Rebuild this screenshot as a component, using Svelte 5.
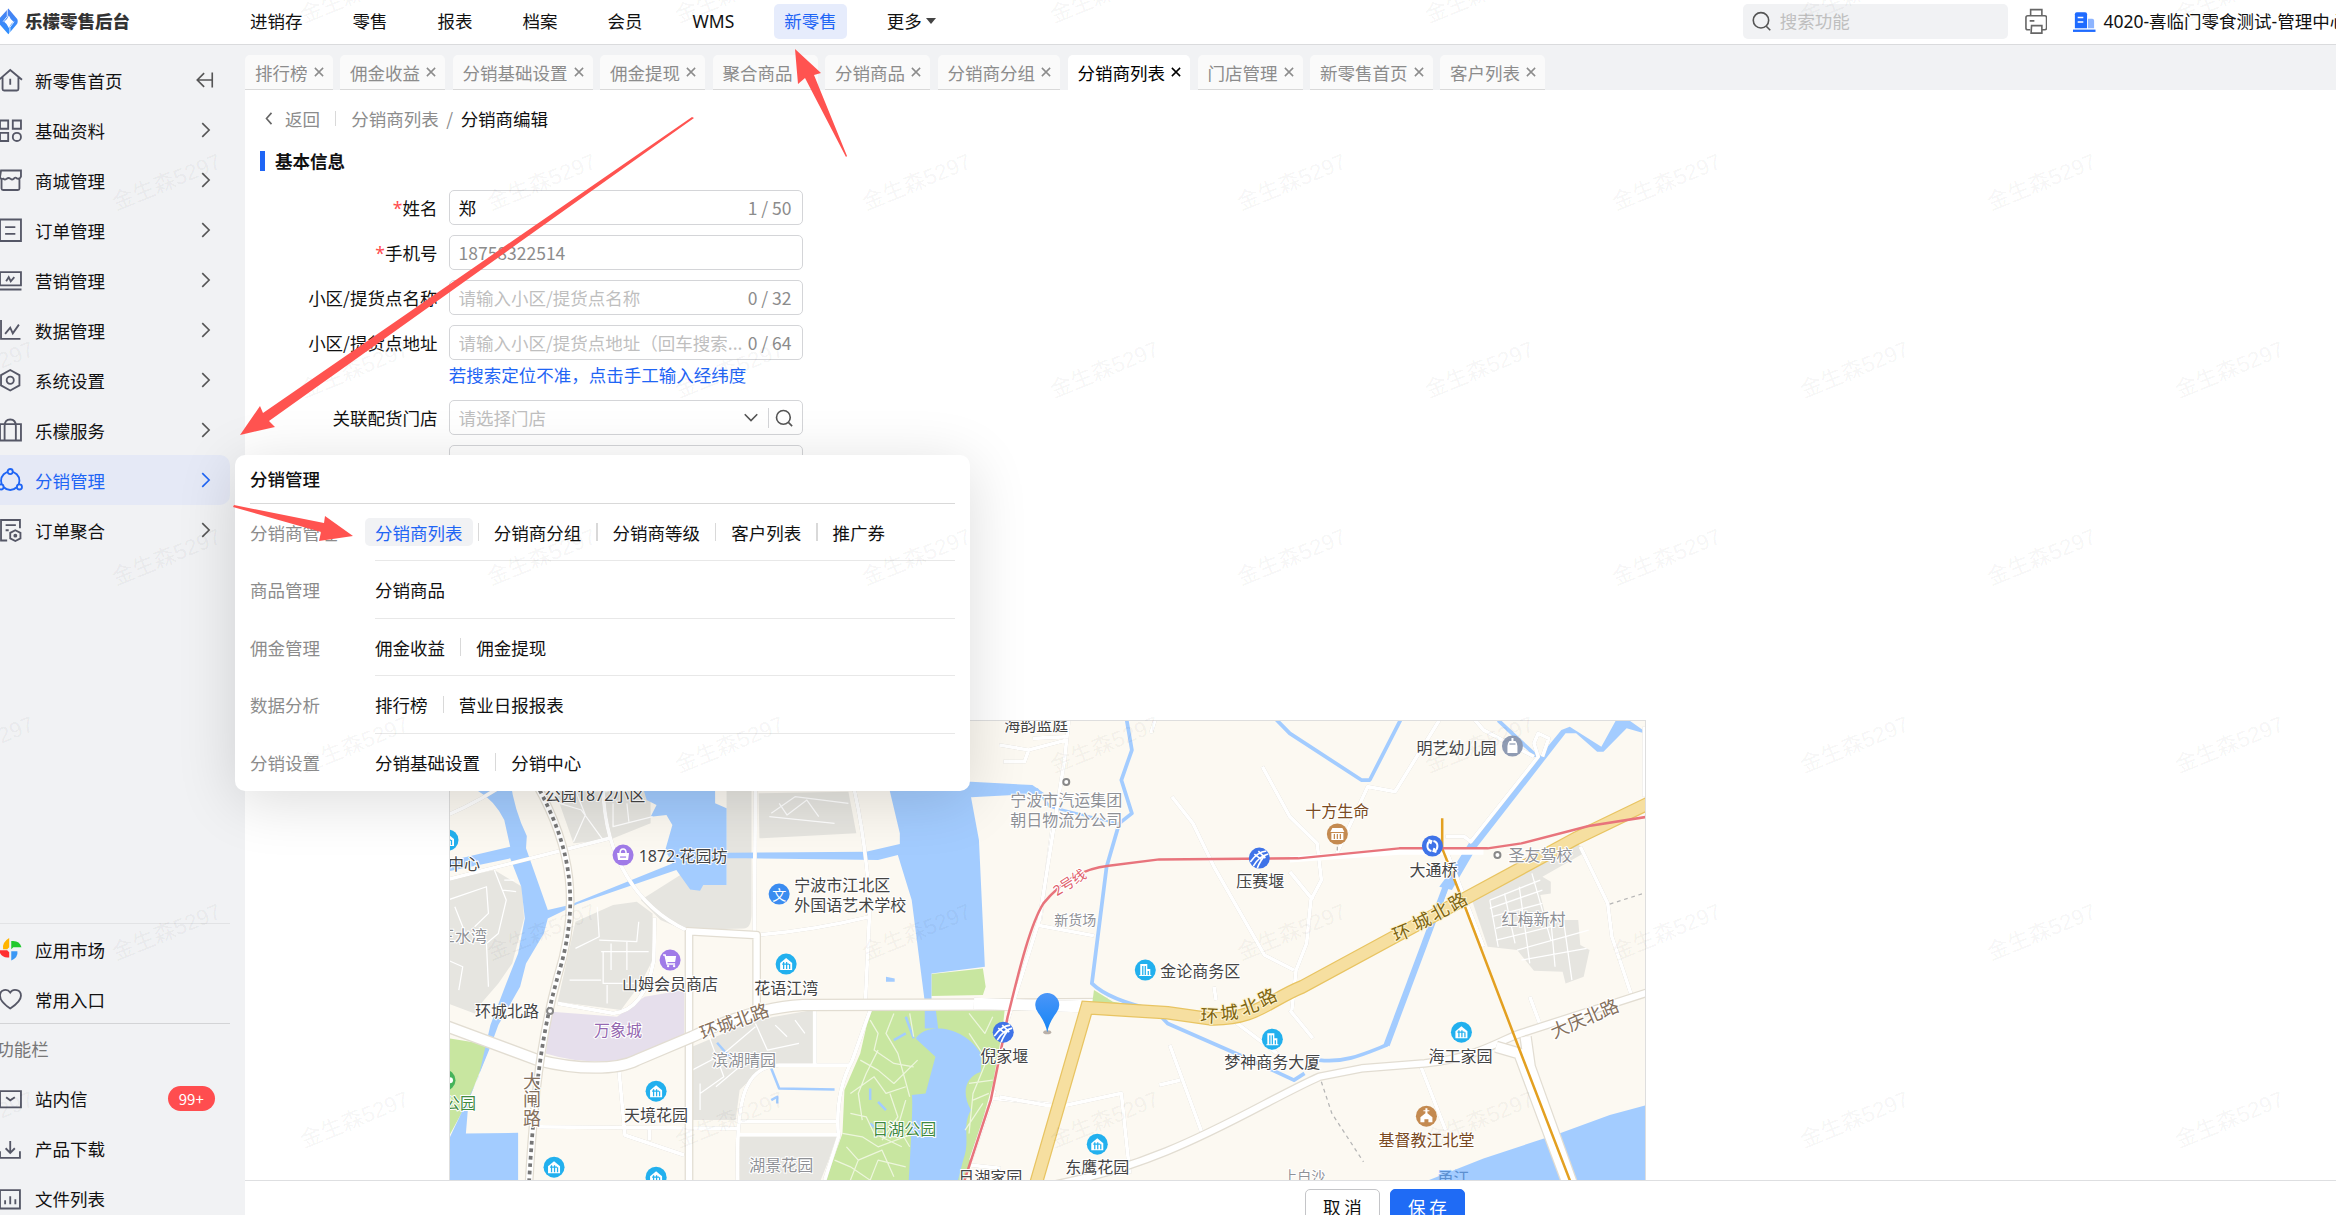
<script>
  const topNav = ['进销存', '零售', '报表', '档案', '会员', 'WMS', '新零售'];

  const sideNav = [
    { label: '新零售首页', icon: 'home' },
    { label: '基础资料', icon: 'grid' },
    { label: '商城管理', icon: 'shop' },
    { label: '订单管理', icon: 'order' },
    { label: '营销管理', icon: 'promo' },
    { label: '数据管理', icon: 'chart' },
    { label: '系统设置', icon: 'setting' },
    { label: '乐檬服务', icon: 'bag' },
    { label: '分销管理', icon: 'share' },
    { label: '订单聚合', icon: 'merge' }
  ];

  const tabs = ['排行榜', '佣金收益', '分销基础设置', '佣金提现', '聚合商品', '分销商品', '分销商分组', '分销商列表', '门店管理', '新零售首页', '客户列表'];

  const menu = [
    { group: '分销商管理', items: ['分销商列表', '分销商分组', '分销商等级', '客户列表', '推广券'] },
    { group: '商品管理', items: ['分销商品'] },
    { group: '佣金管理', items: ['佣金收益', '佣金提现'] },
    { group: '数据分析', items: ['排行榜', '营业日报报表'] },
    { group: '分销设置', items: ['分销基础设置', '分销中心'] }
  ];

  const places = [
    { t: '公园1872小区', x: 596, y: 795 },
    { t: '1872·花园坊', x: 684, y: 856 },
    { t: '宁波市江北区', x: 843, y: 885 },
    { t: '外国语艺术学校', x: 851, y: 905 },
    { t: '中心', x: 465, y: 864 },
    { t: '三水湾', x: 464, y: 936, c: 'gray' },
    { t: '山姆会员商店', x: 671, y: 984 },
    { t: '花语江湾', x: 787, y: 988 },
    { t: '环城北路', x: 508, y: 1011 },
    { t: '万象城', x: 619, y: 1030, c: 'violet' },
    { t: '环城北路', x: 735, y: 1021, c: 'road', r: -20 },
    { t: '滨湖晴园', x: 745, y: 1060, c: 'gray' },
    { t: '大', x: 533, y: 1081, c: 'road' },
    { t: '闸', x: 533, y: 1099, c: 'road' },
    { t: '路', x: 533, y: 1118, c: 'road' },
    { t: '天境花园', x: 657, y: 1115 },
    { t: '公园', x: 461, y: 1103, c: 'green' },
    { t: '湖景花园', x: 782, y: 1165, c: 'gray' },
    { t: '日湖公园', x: 905, y: 1129, c: 'green' },
    { t: '倪家堰', x: 1005, y: 1056 },
    { t: '日湖家园', x: 991, y: 1177 },
    { t: '海韵蓝庭', x: 1037, y: 725 },
    { t: '宁波市汽运集团', x: 1067, y: 800, c: 'gray' },
    { t: '朝日物流分公司', x: 1067, y: 820, c: 'gray' },
    { t: '2号线', x: 1070, y: 882, c: 'red', r: -32 },
    { t: '新货场', x: 1076, y: 919, c: 'small' },
    { t: '压赛堰', x: 1261, y: 881 },
    { t: '十方生命', x: 1338, y: 811, c: 'brown' },
    { t: '明艺幼儿园', x: 1457, y: 748 },
    { t: '大通桥', x: 1434, y: 870 },
    { t: '圣友驾校', x: 1541, y: 855, c: 'gray' },
    { t: '红梅新村', x: 1534, y: 919, c: 'gray' },
    { t: '环', x: 1402, y: 932, c: 'ring', r: -22 },
    { t: '城', x: 1422, y: 921, c: 'ring', r: -25 },
    { t: '北', x: 1440, y: 911, c: 'ring', r: -28 },
    { t: '路', x: 1458, y: 901, c: 'ring', r: -30 },
    { t: '金论商务区', x: 1201, y: 971 },
    { t: '环', x: 1210, y: 1015, c: 'ring', r: 3 },
    { t: '城', x: 1230, y: 1012, c: 'ring', r: -6 },
    { t: '北', x: 1250, y: 1006, c: 'ring', r: -20 },
    { t: '路', x: 1268, y: 997, c: 'ring', r: -26 },
    { t: '梦神商务大厦', x: 1273, y: 1062 },
    { t: '海工家园', x: 1461, y: 1056 },
    { t: '大庆北路', x: 1585, y: 1018, c: 'road', r: -23 },
    { t: '基督教江北堂', x: 1427, y: 1140, c: 'brown' },
    { t: '东鹰花园', x: 1098, y: 1167 },
    { t: '上白沙', x: 1305, y: 1175, c: 'small' },
    { t: '甬江', x: 1454, y: 1178, c: 'river' }
  ];

  const houses = [[787, 964], [657, 1091], [555, 1167], [657, 1177], [449, 840], [1462, 1032], [1098, 1144]];
  const offices = [[1146, 970], [1273, 1039]];
  const metros = [[1260, 858], [1004, 1032]];

  const marks = [];
  for (let row = 0; row < 7; row++) {
    for (let col = -1; col < 7; col++) {
      marks.push({ x: 116 + col * 375 + (row % 2 ? 0 : 188), y: 23 + row * 187.5 });
    }
  }

  let name = $state('郑');
  let phone = $state('18758322514');
  let level = $state('普通分销商');
</script>

{#snippet icon(kind)}
  <svg class="icon" viewBox="0 0 22 22" aria-hidden="true">
    {#if kind === 'home'}
      <path d="M-1 10.5 10 1l11.500 9.500M2.500 8v11.500q0 1.500 1.500 1.500h12.500q1.500 0 1.500-1.500V8M10 9.500v6" />
    {:else if kind === 'grid'}
      <path d="M0 1.500h8v8h-8zM12.500 1.500h8v8h-8zM0 13.500h8v8h-8z" /><circle cx="16.500" cy="17.500" r="4" />
    {:else if kind === 'shop'}
      <path d="M1 1.500h19.500v6q-1 2.500-3.500 2-2.500-2-3.500 0-2 1.500-3.500 0-1.500-1.500-3.500 0-2 1.500-3.500 0-2 1-3-1.500zM1.500 9v10q0 1.500 1.500 1.500h14.500q1.500 0 1.500-1.500V9" />
    {:else if kind === 'order'}
      <path d="M0 .5h20.500v21H0zM5 8h10M5 14.500h10" />
    {:else if kind === 'promo'}
      <path d="M0 3h20.500v13H0zM-1 20h22M6 12l2.500-4 2 4 3.500-4" />
    {:else if kind === 'chart'}
      <path d="M1 1v18.500h19M5 14.500l5-6 2.500 5.500 6-8.500" />
    {:else if kind === 'setting'}
      <path d="M10 1l9 5v10l-9 5-9-5V6z" /><circle cx="10" cy="11" r="3.500" />
    {:else if kind === 'bag'}
      <path d="M0 5h20.500v16H0zM4.500 21V7q0-6.500 5.500-6.500T15.500 7v14" />
    {:else if kind === 'share'}
      <circle cx="10" cy="11.500" r="9" /><circle class="dot" cx="10" cy="2.500" r="2.500" /><circle class="dot" cx="1" cy="17.500" r="2.500" /><circle class="dot" cx="19" cy="17.500" r="2.500" />
    {:else if kind === 'merge'}
      <path d="M19.500 9V1H1v20h6M5.500 6h10M5.500 11h3" /><path d="M15 11l5 2.500v5.500l-5 2.500-5-2.500v-5.500z" /><circle cx="15" cy="16.300" r="1" />
    {:else if kind === 'heart'}
      <path d="M10 20C4 16 0 12 0 7.500 0 1.500 7 0 10 4.500 13 0 20.500 1.500 20.500 7.500 20.500 12 16 16 10 20z" />
    {:else if kind === 'mail'}
      <path d="M0 3h20.500v16H0zM6 9l4 3 4.500-3" />
    {:else if kind === 'download'}
      <path d="M0 13v6.500h19.500V13M10 3v11M5.500 10l4.500 4.500L14.500 10" />
    {:else if kind === 'file'}
      <path d="M0 2h19.500v18H0zM5 16v-4M10 16V8M15 16v-5" />
    {/if}
  </svg>
{/snippet}

{#snippet chevron()}
  <svg class="chevron" viewBox="0 0 16 16" aria-hidden="true"><path d="M5 2.500 10.500 8 5 13.500" /></svg>
{/snippet}

<div class="stage">
  <div class="app">
    <header>
      <a class="logo" href="#home">
        <svg viewBox="0 0 24 30" aria-hidden="true">
          <defs><linearGradient id="brand" x1="0" y1="0" x2="0" y2="1"><stop offset="0" stop-color="#4a80f0" /><stop offset="1" stop-color="#2f90ff" /></linearGradient></defs>
          <path fill="url(#brand)" fill-rule="evenodd" d="M8 2.500 16.500 12.500q1 2 0 4.500L8 27-1 17V12.500zM8.500 9Q7 13 4 15 7 17 8.500 21 10 17 13 15 10 13 8.500 9z" />
          <path stroke="#fff" stroke-width=".8" d="M7 3V10L3 15M9.500 27V20.500L13.500 15" fill="none" />
        </svg>
        <strong>乐檬零售后台</strong>
      </a>
      <nav class="top">
        {#each topNav as item}
          <a href="#top" class:on={item === '新零售'}>{item}</a>
        {/each}
        <button type="button">更多<i class="caret"></i></button>
      </nav>
      <div class="tools">
        <label class="search">
          <svg viewBox="0 0 16 16" aria-hidden="true"><circle cx="7.500" cy="7" r="5.800" /><path d="M11.500 11.500 14.500 14.500" /></svg>
          <input type="text" placeholder="搜索功能" aria-label="搜索功能" />
        </label>
        <button class="print" type="button" aria-label="打印">
          <svg viewBox="0 0 24 28"><path d="M6 8V1.500h12V8M5.500 23H3q-2 0-2-2V10q0-2 2-2h18q2 0 2 2v11q0 2-2 2h-2.500M7 18.500h11v8H6.500zM5 13.500h5" /></svg>
        </button>
        <button class="org" type="button">
          <svg viewBox="0 0 24 22" aria-hidden="true"><path fill="#1f6bff" d="M2 3q0-2 2-2h9q2 0 2 2v15H2z" /><path fill="#8db4ff" d="M16 8h4.500q2 0 2 2v8H16z" /><path fill="#1f6bff" d="M0 19.500h24V22H0z" /><path stroke="#fff" stroke-width="1.600" d="M5 6.500h6M5 11.500h6" /></svg>
          4020-喜临门零食测试-管理中心
        </button>
      </div>
    </header>

    <div class="body">
      <aside>
        <nav class="side">
          {#each sideNav as item, i}
            <a href="#side" class:on={item.icon === 'share'}>
              {@render icon(item.icon)}
              <span>{item.label}</span>
              {#if i === 0}
                <svg class="collapse" viewBox="0 0 16 16" aria-hidden="true"><path d="M6.500 2.500 1 8l5.500 5.500M1 8h12M13 2v12" /></svg>
              {:else}
                {@render chevron()}
              {/if}
            </a>
          {/each}
        </nav>
        <nav class="side extra">
          <a href="#market">
            <svg class="icon" viewBox="0 0 22 22" aria-hidden="true">
              <path class="fill" fill="#ffb400" d="M9 0v9L7 11H3Q2 4 9 0z" /><path class="fill" fill="#22c92e" d="M11 3q8-1 10 6h-8l-2 2z" />
              <path class="fill" fill="#ff2f2f" d="M-1 12h8l2 2v5q-8 1-10-7z" /><path class="fill" fill="#3b98f5" d="M11 13h6q1 6-6 9z" />
            </svg>
            <span>应用市场</span>
          </a>
          <a href="#fav">{@render icon('heart')}<span>常用入口</span></a>
        </nav>
        <nav class="side extra tail">
          <h2>功能栏</h2>
          <a href="#mail">{@render icon('mail')}<span>站内信</span><b class="badge">99+</b></a>
          <a href="#download">{@render icon('download')}<span>产品下载</span></a>
          <a href="#files">{@render icon('file')}<span>文件列表</span></a>
        </nav>
      </aside>

      <main>
        <div class="tabs">
          {#each tabs as tab}
            <div class="tab" class:on={tab === '分销商列表'}>
              <a href="#tab">{tab}</a>
              <button type="button" aria-label="关闭"><svg viewBox="0 0 8 8"><path d="M.7.7l6.600 6.600M7.300.7.7 7.300" /></svg></button>
            </div>
          {/each}
        </div>

        <div class="page">
          <div class="crumbs">
            <a href="#back"><svg viewBox="0 0 8 12" aria-hidden="true"><path d="M6 1.500 2 6l4 4.500" /></svg>返回</a>
            <i></i>
            <a href="#list">分销商列表</a>
            <em>/</em>
            <span>分销商编辑</span>
          </div>
          <h1>基本信息</h1>

          <form>
            <div class="row">
              <label for="name"><b>*</b>姓名</label>
              <div class="field"><input id="name" type="text" bind:value={name} /><span>1 / 50</span></div>
            </div>
            <div class="row">
              <label for="phone"><b>*</b>手机号</label>
              <div class="field"><input id="phone" class="dim" type="text" bind:value={phone} readonly /></div>
            </div>
            <div class="row">
              <label for="spot">小区/提货点名称</label>
              <div class="field"><input id="spot" type="text" placeholder="请输入小区/提货点名称" /><span>0 / 32</span></div>
            </div>
            <div class="row">
              <label for="addr">小区/提货点地址</label>
              <div class="field"><input id="addr" type="text" placeholder="请输入小区/提货点地址（回车搜索..." /><span>0 / 64</span></div>
            </div>
            <a class="hint" href="#manual">若搜索定位不准，点击手工输入经纬度</a>
            <div class="row">
              <label for="store">关联配货门店</label>
              <div class="field pick">
                <input id="store" type="text" placeholder="请选择门店" />
                <svg viewBox="0 0 16 16" aria-hidden="true"><path d="M3 5l5 5 5-5" /></svg>
                <button type="button" aria-label="搜索门店"><svg viewBox="0 0 16 16"><circle cx="7.500" cy="7.500" r="5.500" /><path d="M11.500 11.500 14.500 14.500" /></svg></button>
              </div>
            </div>
            <div class="row">
              <div class="field alone"><input type="text" aria-label="分销商等级" bind:value={level} /></div>
            </div>

            <div class="map">
              <svg viewBox="451 721 1195 467" preserveAspectRatio="xMinYMin meet" role="img" aria-label="地图">
                <rect class="land" x="449" y="721" width="1600" height="500" />
                <g transform="translate(440 700) scale(.3954 .3333)">
                  <path class="block" d="M0 545 140 510 210 560 215 655 185 790 150 850 110 905 90 940 22 910zM290 260H535V370L430 420 340 430zM345 665 440 615 500 605 540 640V780L510 850 460 930 300 905zM510 600 630 510 727 555V250H790V640Q790 685 770 685L620 690 560 660zM808 280 1035 275 1055 400 810 415zM640 1040 800 960 945 930V1090L820 1100 760 1170 750 1260H640zM760 1310H1005L985 1380 965 1440H760z" />
                  <path class="mall" d="M285 935 450 950 520 890 620 870V1005Q540 1060 450 1083 350 1090 270 1060z" />
                  <path class="park" d="M1090 930H1430L1425 985 1400 1150 1330 1450H975L1020 1300 1025 1170 1065 1060zM1245 822 1375 805 1382 860 1375 885 1245 888zM0 1010 130 1035 75 1200 22 1315z" />
                  <path class="water" d="M60 180 180 240Q190 330 222 408L220 445 275 630 330 615 590 490 572 450 590 375 575 345 535 350 550 315 525 300 515 260H698V310L727 325V555H668L660 572 635 568 600 510 350 612 275 655 265 700 220 790 205 860 150 975 130 1040 75 1200 68 1300 200 1298V1450H0V1380L100 1130 130 975 170 850 200 760 217 655 208 560 180 475 0 520V490L180 440 165 360Q140 300 95 270zM725 458 1080 455 1165 432V400L1135 250 1345 245 1500 255 1530 280 1345 292 1365 420 1380 800 1245 820V905H1228L1195 600 1160 465 1110 480 725 474zM1205 1015C1230 970 1320 970 1370 1060V1115C1330 1130 1320 1180 1345 1230 1320 1280 1345 1320 1325 1380L1310 1450H1187C1190 1400 1200 1190 1195 1185L1230 1180 1255 1070zM1228 930H1256L1262 985 1228 985zM1130 830 1152 835V845H1130z" />
                  <path class="brook" d="M840 1105 860 1165 1000 1168M703 1028 745 1085M840 1200 855 1190 855 1210M1150 1020 1180 1000M1180 950 1200 1015M1090 1165V1200M1110 1205 1130 1230M1090 1270 1110 1290" />
                  <path class="lane" d="M0 545 430 415M545 653 543 780Q520 930 440 940L300 910M1050 270C1080 430 1090 600 1088 650L1078 905M805 705Q950 690 1088 650M1090 930 1045 1080Q1000 1180 1010 1310L975 1440M250 1280 755 1285M755 1264H1005M755 1304H1005M755 1440C750 1200 770 1100 860 1095H1040M950 930V1095M455 1110 470 1305 620 1365M532 1285V1320M415 270C420 470 500 620 625 690M22 345Q110 300 180 240M1400 1195 1545 1212M1345 1380 1405 1170M1345 1395 1420 1405M800 270 797 700M1550 390 1520 660" />
                  <path class="alley" d="M305 310 360 330 415 420M345 270 370 345 340 425M440 310 440 380 540 350M475 310 480 365M840 340 900 290 1035 310M835 350 1000 370M860 310 880 345 930 300 960 350M400 620 405 710 345 745M405 720 500 725 505 665M410 755H530M415 755V850H535M330 840H410M435 730V810M475 725V810M425 855V910M22 600 120 560 125 640 90 680M40 620 70 710M22 780 60 800 50 870M140 510 170 600 150 700 120 730M165 540H190M160 570 195 575M120 730 125 860M640 1110 720 1060 800 980M680 1000 720 1130 660 1180M700 1160 780 1080M800 970 830 1050 910 1030M850 975 880 1010M900 960 925 1000M660 1150 660 1230" />
                  <path class="alley path" d="M1090 960 1110 1000 1100 1050 1150 1090 1200 1100M1065 1080 1110 1110 1150 1150 1210 1080M1040 1180 1100 1130 1130 1180 1180 1160M1040 1240 1080 1250 1100 1300 1170 1340M1020 1300 1070 1310 1110 1340 1200 1300M1060 1380 1120 1350 1150 1430M1110 1050 1080 1120 1060 1180 1070 1260M1150 940 1130 1000 1160 1060 1190 1190M1140 1180 1160 1250 1120 1320M1000 1380 1040 1400 1090 1440M1090 1440 1110 1380 1180 1400M1180 1200 1160 1280 1190 1340M1340 1000 1385 1080 1350 1180 1340 1300M1340 940 1380 1000 1400 950M1330 1290 1375 1210M1340 1150 1400 1140M1350 1200 1390 1180M1030 1340 1060 1380 1040 1440M1190 940 1200 1010" />
                  <path class="edge w8" d="M632 690V1440M625 693 803 705V920" />
                  <path class="white w8" d="M632 690V1440M625 693 803 705V920" />
                  <path class="edge w12" d="M0 970 250 1080C350 1110 450 1110 500 1080L640 1010C760 940 850 920 920 915L1690 912" />
                  <path class="white w12" d="M0 970 250 1080C350 1110 450 1110 500 1080L640 1010C760 940 850 920 920 915L1690 912" />
                  <path class="edge w8" d="M245 250C340 450 355 620 300 830 270 960 245 1100 228 1440" />
                  <path class="white w8" d="M245 250C340 450 355 620 300 830 270 960 245 1100 228 1440" />
                  <path class="rail" d="M245 250C340 450 355 620 300 830 270 960 245 1100 228 1440" />
                </g>
                <g transform="translate(1000 700) scale(.4209 .3333)">
                  <path class="block" d="M1120 590 1375 430 1388 460 1290 530 1310 545V580L1285 585 1300 660H1375L1380 735 1402 750 1388 830 1345 850 1338 815 1270 812 1230 750 1160 740z" />
                  <path class="water" d="M1000 1450 1150 1375 1330 1300 1450 1245 1545 1212V1450zM1085 490 1120 420 1335 90 1355 80 1430 140 1465 60H1495L1545 105 1490 85 1435 155 1420 155 1370 100 1345 100 1135 440 1075 570 1045 560z" />
                  <path class="park" d="M225 870 270 905 370 925 220 918z" />
                  <path class="stream" d="M302 55 315 150 290 240 315 340 285 370 255 500 220 850Q260 900 370 930L400 970 580 1070 700 1140 725 1120M760 1080C820 1090 870 1060 920 1035L1060 570M655 55 690 100 860 240 880 240 955 55M1185 61 1290 185" />
                  <path class="brook" d="M-60 265 40 262 90 268 120 320 280 370" />
                  <path class="stream broad" d="M920 1035 1065 545" />
                  <path class="lane" d="M410 290 460 370 510 500 630 765 700 810M560 965 660 1060M690 930 745 1015M695 930 705 810 730 730 740 600 765 540 755 430 690 350 625 200M690 515 745 600M800 465 875 260 940 275 1045 61M165 61 155 180 95 660 20 960M0 135 70 150 160 120M10 185H60L70 150M80 115 165 110M360 100 370 60M90 675 225 707M405 1035 485 1310M380 1155 430 1140M0 1190 110 1215 160 1215 290 1180 310 1420M1000 1095 1060 1290M1380 440 1445 610 1455 710 1500 880M1260 890 1285 975M1060 410H1105L1120 425 1280 170 1270 130 1280 100 1305 115 1290 170M1130 60 1150 90 1270 170M510 860 515 900M1060 445 1150 740M1532 80V290" />
                  <path class="alley" d="M1165 600 1285 540M1165 625 1290 570M1170 650 1290 610M1180 685 1300 640M1180 720 1310 680M1165 600 1185 740M1200 580 1225 730M1235 560 1260 790M1265 520 1310 720M1230 750 1400 690M1240 780 1395 745M1310 660 1320 800M1340 660 1360 840" />
                  <path class="lane wide" d="M-60 910 210 920" />
                  <path class="edge w8" d="M100 1460C400 1400 600 1220 760 1130L860 1105 1010 1090C1150 1070 1200 1010 1250 995L1545 875" />
                  <path class="white w8" d="M100 1460C400 1400 600 1220 760 1130L860 1105 1010 1090C1150 1070 1200 1010 1250 995L1545 875" />
                  <path class="edge w12" d="M1180 1040 1235 1060 1350 1450M1250 1010 1260 1100 1360 1450" />
                  <path class="white w12" d="M1180 1040 1235 1060 1350 1450M1250 1010 1260 1100 1360 1450" />
                  <path class="white w8" d="M690 478 950 455 1150 455" />
                  <path class="dash" d="M765 1145 790 1240 865 1385M1450 612 1530 580M803 440V458" />
                  <path class="goldedge" d="M85 1460 208 923 400 938 500 956C610 960 640 900 720 860L1100 600 1370 415 1550 305" />
                  <path class="gold" d="M85 1460 208 923 400 938 500 956C610 960 640 900 720 860L1100 600 1370 415 1550 305" />
                  <path class="line4" d="M1052 355V445L1100 600 1230 1030 1358 1450" />
                  <path class="line2" d="M-85 1450-20 1200 20 950C40 850 70 680 105 610 150 540 200 505 260 497L380 478 710 475 950 445H1160L1240 430 1400 378 1550 348" />
                </g>

                <g class="spots">
                  <circle cx="551" cy="1011" r="3" /><circle cx="1067" cy="782" r="3" /><circle cx="1498" cy="855" r="3" />
                </g>

                {#each houses as [x, y]}
                  <g transform="translate({x} {y})"><circle r="10.500" fill="#22b0ee" /><path fill="#fff" d="M-6-1 0-6 6-1V6H-6z" /><path stroke="#22b0ee" d="M-4 0H3M-2.500-2V5M.5-2V5M3.500 0V5" /></g>
                {/each}
                {#each offices as [x, y]}
                  <g transform="translate({x} {y})"><circle r="10.500" fill="#22b0ee" /><path fill="#fff" d="M-5-6H2V-1H5V5H6V6H-6V5H-5z" /><path stroke="#22b0ee" d="M-2.500-4V5M0-4V5M3 1V5" /></g>
                {/each}
                {#each metros as [x, y]}
                  <g transform="translate({x} {y})"><circle r="10.500" fill="#3f73e8" /><path fill="none" stroke="#fff" stroke-width="1.300" d="M-9 4Q-2-6 7-7M-6 8Q0-2 9-4M-5-4 3 2M-1-7 6 0M-2 10Q1 2 6-3" /></g>
                {/each}
                <g transform="translate(1433 846)"><circle r="10.500" fill="#3f73e8" /><path fill="none" stroke="#fff" stroke-width="1.600" d="M-1 5Q-5 4-5 0T-2-5M1-5Q5-4 5 0T2 5M-4-6-1-5-2-2M4 6 1 5 2 2" /></g>
                <g transform="translate(624 855)"><circle r="10.500" fill="#a07be8" /><path fill="#fff" d="M-6-2H6L5 5H-5z" /><path fill="none" stroke="#fff" stroke-width="1.200" d="M-3-2Q-3-6 0-6T3-2" /><path stroke="#a07be8" d="M-3 2H3" /></g>
                <g transform="translate(671 960)"><circle r="10.500" fill="#a07be8" /><path fill="#fff" d="M-5-4H6L5 2H-3z" /><path fill="none" stroke="#fff" stroke-width="1.200" d="M-7-5H-5L-3 4H5" /><circle cx="-2" cy="6" r="1.200" fill="#fff" /><circle cx="4" cy="6" r="1.200" fill="#fff" /></g>
                <g transform="translate(780 894)"><circle r="10.500" fill="#3b8cf0" /><text class="glyph">文</text></g>
                <g transform="translate(446 1080)"><circle r="10.500" fill="#45b35a" /><circle r="3" cx="5" fill="#fff" /></g>
                <g transform="translate(1338 834)"><circle r="10.500" fill="#c48a50" /><path fill="#fff" d="M-5-6H5L7-2H-7zM-6-1H6V6H-6z" /><path stroke="#c48a50" d="M-3 0V5M0 0V5M3 0V5" /></g>
                <g transform="translate(1427 1116)"><circle r="10.500" fill="#c48a50" /><path fill="#fff" d="M-1-8H1V-6H3V-5H1V-3L6 1V6H2V3H-2V6H-6V1L-1-3V-5H-3V-6H-1z" /></g>
                <g transform="translate(1513 746)"><circle r="10.500" fill="#8f9bb3" /><path fill="#fff" d="M-1-8H1V-5H3Q5-3 5 0V7H-5V0Q-5-3-3-5H-1z" /><path stroke="#8f9bb3" d="M-3-2H3" /></g>

                {#each places as p}
                  <text class={p.c} transform="translate({p.x} {p.y}) rotate({p.r ?? 0})">{p.t}</text>
                {/each}

                <ellipse cx="1048" cy="1032" rx="4" ry="2" fill="#b9b0a8" />
                <path fill="url(#pin)" d="M1048 1032Q1046 1022 1039 1013 1036 1009 1036 1005A12 12 0 0 1 1060 1005Q1060 1009 1057 1013 1050 1022 1048 1032z" />
                <defs><linearGradient id="pin" x1="0" y1="0" x2="0" y2="1"><stop offset="0" stop-color="#4b96f8" /><stop offset="1" stop-color="#1484f5" /></linearGradient></defs>
              </svg>
            </div>
          </form>
        </div>

        <footer>
          <button type="button">取 消</button>
          <button type="button" class="primary">保 存</button>
        </footer>
      </main>
    </div>

    <section class="popup">
      <h2>分销管理</h2>
      {#each menu as row}
        <div class="group">
          <h3>{row.group}</h3>
          <ul>
            {#each row.items as item}
              <li><a href="#menu" class:on={item === '分销商列表'}>{item}</a></li>
            {/each}
          </ul>
        </div>
      {/each}
    </section>
  </div>

  <svg class="overlay" aria-hidden="true">
    <g class="marks">
      {#each marks as m}
        <text transform="translate({m.x} {m.y}) rotate(-22)">金生森5297</text>
      {/each}
    </g>
    <g fill="#ff5350">
      <path d="M240 435 260 406 263 413 692 117 694 118 269 421 275 427z" />
      <path d="M795 49 821 73 814 75 847 156 846 157 805 78 798 84z" />
      <path d="M353 536 325 516 324 523 234 505 233 507 321 532 319 541z" />
    </g>
  </svg>
</div>

<style>
  :global(html), :global(body), :global(#app) { height: 100%; }
  :global(body) { margin: 0; overflow: hidden; }
  * { box-sizing: border-box; }
  a { color: inherit; text-decoration: none; }
  h1, h2, h3, ul { margin: 0; padding: 0; font-weight: 400; font-size: 14px; list-style: none; }
  button, input { font: inherit; color: inherit; border: 0; background: none; padding: 0; outline: 0; min-width: 0; }
  svg { display: block; flex: none; }

  .stage { position: relative; height: 100%; overflow: hidden; background: #fff; }
  .app {
    zoom: 1.25;
    position: relative;
    display: flex;
    flex-direction: column;
    height: calc(100% + 14px);
    font: 14px/20px "Noto Sans CJK SC", sans-serif;
    color: #111;
  }

  header { display: flex; align-items: flex-start; height: 36px; padding-top: 3px; border-bottom: 1px solid #dadbdd; background: #fff; font-family: "Noto Sans", "Noto Sans CJK SC", sans-serif; white-space: nowrap; }
  .logo { display: flex; align-items: center; width: 192px; height: 28px; color: #333; }
  .logo svg { width: 20px; height: 25px; }
  .logo strong { font-weight: 900; }
  .top { display: flex; gap: 24px; flex: 1; }
  .top a, .top button { display: flex; align-items: center; height: 28px; padding: 0 8px; border-radius: 4px; }
  .top .on { background: #e6ecfc; color: #1f65f5; }
  .caret { margin-left: 3px; border: 4px solid transparent; border-top: 5px solid #444; border-bottom: 0; }
  .tools { display: flex; align-items: center; flex: none; margin-right: -9px; }
  .search { display: flex; align-items: center; gap: 6px; width: 212px; height: 28px; padding: 0 6px; border-radius: 4px; background: #f1f2f4; }
  .search svg { width: 17px; height: 17px; fill: none; stroke: #555; stroke-width: 1.200; }
  .search input { flex: 1; }
  input::placeholder { color: #bfbfbf; opacity: 1; }
  .print { margin: 0 21px 0 13px; }
  .print svg { width: 18px; height: 23px; fill: none; stroke: #666; stroke-width: 1.700; }
  .org { display: flex; align-items: center; gap: 6px; }
  .org svg { width: 18px; height: 17px; }

  .body { display: flex; flex: 1; min-height: 0; }
  aside { display: flex; flex-direction: column; width: 196px; flex: none; padding: 8px 12px 7px 0; background: #f1f2f4; }
  .side { display: flex; flex-direction: column; }
  .side a { display: flex; align-items: center; gap: 10px; height: 40px; padding-right: 11px; border-radius: 0 8px 8px 0; }
  .side span { flex: 1; }
  .side .on { background: #e5e9f6; color: #1f65f5; }
  .icon { width: 18px; height: 18px; fill: none; stroke: #555766; stroke-width: 1.800; overflow: visible; }
  .icon .fill { stroke: none; }
  .icon .dot { fill: #e5e9f6; }
  .on .icon, .on .chevron { stroke: #1f65f5; }
  .chevron, .collapse { width: 16px; height: 16px; fill: none; stroke: #555; stroke-width: 1.300; }
  .extra { margin-top: auto; border-top: 1px solid #e2e3e5; }
  .extra.tail { margin-top: -1px; border-top-color: #d3d4d6; }
  .tail h2 { height: 40px; line-height: 40px; margin-left: -3px; color: #777; }
  .side .badge { margin-right: 1px; padding: 0 9px; border-radius: 10px; background: #ff4d4f; color: #fff; font-size: 12px; font-weight: 400; }

  main { display: flex; flex-direction: column; flex: 1; min-width: 0; }
  .tabs { display: flex; gap: 6px; padding-top: 8px; background: #f1f2f4; white-space: nowrap; }
  .tab { display: flex; align-items: center; justify-content: space-between; gap: 5px; height: 28px; padding: 0 7px 0 8px; border-bottom: 1px solid #d9d9d9; border-radius: 4px 4px 0 0; background: #fafafa; color: #8c8c8c; }
  .tab.on { background: #fff; border-color: #fff; color: #000; }
  .tab svg { width: 8px; height: 8px; fill: none; stroke: currentColor; stroke-width: 1.200; }

  .page { flex: 1; min-height: 0; overflow: hidden; padding: 13px 12px 0; }
  .crumbs { display: flex; align-items: center; height: 20px; padding-left: 3px; color: #8c8c8c; white-space: nowrap; }
  .crumbs a { display: flex; align-items: center; gap: 9px; }
  .crumbs svg { width: 8px; height: 12px; fill: none; stroke: #666; stroke-width: 1.300; }
  .crumbs i { width: 1px; height: 12px; margin: 0 12px; background: #d9d9d9; }
  .crumbs em { margin: 0 6px; font-style: normal; }
  .crumbs span { color: #111; }
  h1 { margin: 16px 0 15px; padding-left: 8px; border-left: 4px solid #1f65f5; line-height: 16px; font-weight: 700; }

  form { display: flex; flex-direction: column; gap: 8px; }
  .row { display: flex; align-items: center; gap: 9px; height: 28px; }
  .row label { width: 142px; text-align: right; white-space: nowrap; }
  .row label b { color: #ff4d4f; font-family: "Noto Sans", sans-serif; font-weight: 400; line-height: 1; }
  .field { display: flex; align-items: center; gap: 4px; width: 283px; height: 28px; padding: 0 8px 0 7px; border: 1px solid #d4d5d8; border-radius: 4px; }
  .field.alone { margin-left: 151px; }
  .field input { flex: 1; }
  .field span, .dim { color: #8c8c8c; }
  .pick { padding-right: 6px; }
  .pick svg { width: 16px; height: 16px; fill: none; stroke: #555; stroke-width: 1.300; }
  .pick button { margin-left: 2px; padding-left: 4px; border-left: 1px solid #d4d5d8; }
  .hint { align-self: flex-start; height: 24px; margin: -8px 0 0 151px; line-height: 24px; color: #1f65f5; }

  .map { width: 958px; max-width: 100%; height: 376px; margin: 184px 0 0 151px; overflow: hidden; border: 1px solid #dedede; }
  .map > svg { width: 100%; height: 100%; font-family: "Noto Sans", "Noto Sans CJK SC", sans-serif; }
  .map path { vector-effect: non-scaling-stroke; }
  .land { fill: #fcf9f2; }
  .block { fill: #e6e5e0; }
  .mall { fill: #e6dfec; }
  .park { fill: #c8e6a0; }
  .water { fill: #a3ccff; }
  .brook, .stream, .lane, .alley, .edge, .white, .rail, .dash, .gold, .goldedge, .line2, .line4 { fill: none; stroke-linejoin: round; }
  .brook { stroke: #a3ccff; stroke-width: 2px; }
  .stream { stroke: #a3ccff; stroke-width: 3px; }
  .stream.broad { stroke-width: 5px; }
  .lane { stroke: #fff; stroke-width: 3px; filter: drop-shadow(0 0 1px #cfcbc2); }
  .lane.wide { stroke-width: 9px; }
  .alley { stroke: #fff; stroke-width: 1px; }
  .alley.path { stroke: #edf6dc; }
  .edge { stroke: #e2ddd2; }
  .white { stroke: #fff; }
  .edge.w8 { stroke-width: 7px; }
  .white.w8 { stroke-width: 5px; }
  .edge.w12 { stroke-width: 10px; }
  .white.w12 { stroke-width: 8px; }
  .rail { stroke: #777; stroke-width: 3px; stroke-dasharray: 3 3; }
  .dash { stroke: #b5b5b5; stroke-width: 1px; stroke-dasharray: 3 3; }
  .goldedge, .gold { stroke-linejoin: miter; }
  .goldedge { stroke: #e8c462; stroke-width: 11px; }
  .gold { stroke: #f6dfa0; stroke-width: 9px; }
  .line2 { stroke: #e8747c; stroke-width: 2px; }
  .line4 { stroke: #e3a021; stroke-width: 2px; }
  .spots { fill: #fff; stroke: #888; stroke-width: 2px; }
  .map text { font-size: 16px; text-anchor: middle; dominant-baseline: central; fill: #444; stroke: #fff; stroke-width: 2px; paint-order: stroke; }
  .map .gray { fill: #8f9196; }
  .map .small { fill: #8f9196; font-size: 14px; }
  .map .violet { fill: #9468b0; }
  .map .road { fill: #85705c; font-size: 18px; }
  .map .ring { fill: #7d6410; font-size: 18px; stroke: #fdf3cf; }
  .map .green { fill: #3f8a3f; }
  .map .red { fill: #e0606a; font-size: 14px; }
  .map .brown { fill: #7a4a22; }
  .map .river { fill: #5b8fd0; stroke: #a3ccff; }
  .map .glyph { fill: #fff; stroke: none; font-size: 14px; }

  footer { display: flex; justify-content: center; gap: 8px; height: 42px; padding: 6px 0 0 151px; border-top: 1px solid #dedfe1; background: #fff; }
  footer button { width: 60px; height: 28px; border: 1px solid #c4c5c8; border-radius: 4px; }
  footer .primary { border-color: #1f6bf5; background: #1f6bf5; color: #fff; }

  .popup { position: absolute; left: 188px; top: 364px; width: 588px; padding: 0 12px; border-radius: 8px; background: #fff; box-shadow: 0 8px 48px rgba(0, 0, 0, .14); }
  .popup h2 { height: 39px; line-height: 38px; border-bottom: 1px solid #d9d9d9; font-weight: 500; }
  .group { display: flex; height: 46px; }
  .group h3 { width: 100px; line-height: 46px; color: #8c8c8c; }
  .group ul { display: flex; flex: 1; align-items: center; border-bottom: 1px solid #e8e8e8; }
  .group:last-child ul { border-color: transparent; }
  .group li { display: flex; align-items: center; }
  .group li:first-child { margin-left: -8px; }
  .group li + li::before { content: ""; width: 1px; height: 14px; margin: 0 4px; background: #d9d9d9; }
  .group a { padding: 1px 8px; border-radius: 4px; white-space: nowrap; }
  .group .on { background: #f1f2f4; color: #1f65f5; }

  .overlay { position: absolute; inset: 0; width: 100%; height: 100%; pointer-events: none; }
  .marks { font: 22px "Liberation Sans", "Noto Sans CJK SC", sans-serif; fill: rgba(0, 0, 0, .05); }
</style>
